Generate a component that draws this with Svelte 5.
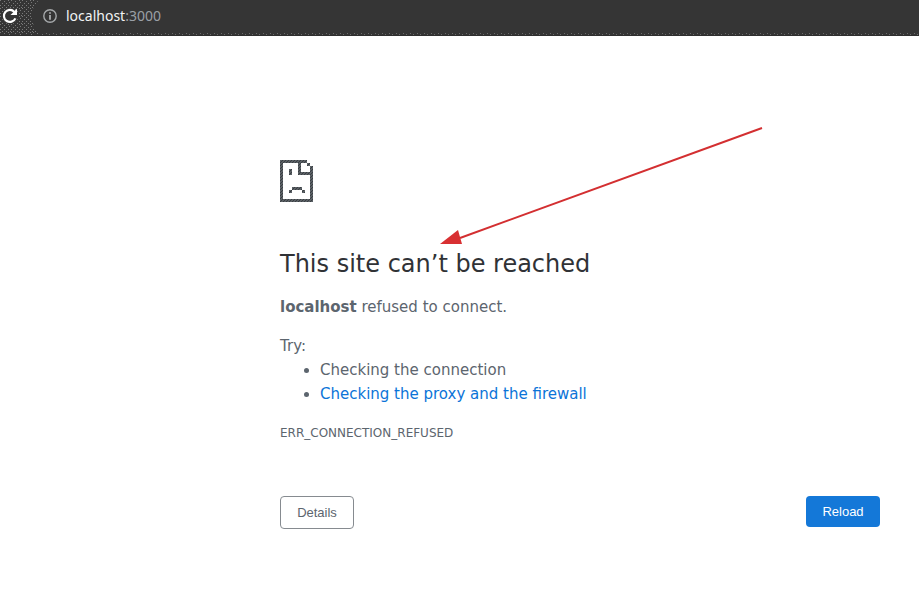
<script>
  const host = 'localhost';
  const port = ':3000';
  const suggestions = [
    { text: 'Checking the connection' },
    { text: 'Checking the proxy and the firewall', href: '#firewall' }
  ];
</script>

<div class="page">
  <header class="toolbar">
    <svg class="grain" aria-hidden="true">
      <defs>
        <pattern id="dots" width="11" height="8" patternUnits="userSpaceOnUse">
          <path
            d="M0 0h1v1H0zM4 1h1v1H4zM8 0h1v1H8zM2 3h1v1H2zM6 3h1v1H6zM9 2h1v1H9zM0 5h1v1H0zM4 5h1v1H4zM8 5h1v1H8zM2 7h1v1H2zM6 7h1v1H6zM10 7h1v1H10z"
            fill="#7a7a7a"
          />
        </pattern>
        <pattern id="edge-dots" width="7" height="2" patternUnits="userSpaceOnUse">
          <path d="M0 0h1v1H0zM4 1h1v1H4z" fill="#6c6c6c" />
        </pattern>
      </defs>
      <path d="M0 0H39L34 6L31 16L34 27L42 35H0z" fill="url(#dots)" />
      <rect x="42" y="33" width="100%" height="2" fill="url(#edge-dots)" />
    </svg>
    <button class="icon-button" aria-label="Reload page">
      <svg width="18" height="18" viewBox="0 0 18 18" aria-hidden="true">
        <circle cx="9" cy="9" r="8" fill="#353535" />
        <path d="M14.4 11.4A6 6 0 1 1 13.4 4.9" fill="none" stroke="#fff" stroke-width="2.2" />
        <path d="M16 1.5V8H9.5z" fill="#fff" />
      </svg>
    </button>
    <div class="address">
      <svg width="14" height="14" viewBox="0 0 14 14" aria-hidden="true">
        <circle cx="7" cy="7" r="6.2" fill="none" stroke="#a5a8aa" stroke-width="1.4" />
        <path d="M6.2 3.3h1.6v1.5H6.2zM6.2 6h1.6v4.7H6.2z" fill="#b8bbbd" />
      </svg>
      <span class="url">{host}<span class="port">{port}</span></span>
    </div>
  </header>

  <main>
    <svg class="sad-page" width="33" height="42" viewBox="0 0 33 42" shape-rendering="crispEdges" aria-hidden="true">
      <defs>
        <pattern id="weave" width="3" height="3" patternUnits="userSpaceOnUse">
          <path d="M0 0h3v3H0z" fill="#5a6065" />
          <path d="M1 1h1v1H1zM2 0h1v1H2zM0 2h1v1H0z" fill="#3a3e42" />
        </pattern>
      </defs>
      <path
        d="M0 0H27V3H21V12H33V15H18V3H3V39H30V15H30V6H33V42H0zM27 3h3v3H27zM9 9h3v6H9zM12 27h10v3H12zM9 30h3v3H9zM22 30h3v3H22z"
        fill="url(#weave)"
      />
    </svg>
    <h1>This site can’t be reached</h1>
    <p><strong>{host}</strong> refused to connect.</p>
    <div class="suggestions">
      <p>Try:</p>
      <ul>
        {#each suggestions as item}
          <li>
            {#if item.href}<a href={item.href}>{item.text}</a>{:else}{item.text}{/if}
          </li>
        {/each}
      </ul>
    </div>
    <p class="code">ERR_CONNECTION_REFUSED</p>
    <div class="actions">
      <button class="details">Details</button>
      <button class="reload">Reload</button>
    </div>
  </main>

  <svg class="arrow" width="324" height="118" viewBox="0 0 324 118" aria-hidden="true">
    <path d="M20 111L322 1" stroke="#d32f31" stroke-width="2" />
    <path d="M0 117L18 103L22 117z" fill="#d83032" />
  </svg>
</div>

<style>
  :global(body) {
    margin: 0;
    background: #fff;
  }
  .page {
    position: relative;
    font-family: 'DejaVu Sans', sans-serif;
    color: #5c656e;
  }
  .toolbar {
    position: relative;
    display: flex;
    align-items: center;
    gap: 24px;
    box-sizing: border-box;
    height: 36px;
    padding: 0 0 4px 1px;
    background: #353535;
    border-bottom: 1px solid #2e2e2e;
  }
  .grain {
    position: absolute;
    inset: 0;
    width: 100%;
    height: 100%;
  }
  .icon-button {
    position: relative;
    display: flex;
    margin: 0;
    padding: 0;
    border: 0;
    background: none;
  }
  .address {
    position: relative;
    display: flex;
    align-items: center;
    gap: 9px;
  }
  .url {
    font: 14px/20px 'Noto Sans', sans-serif;
    color: #f1f3f4;
  }
  .port {
    color: #9aa0a6;
  }
  main {
    padding: 124px 39px 0 280px;
    font-size: 15px;
    line-height: 24px;
  }
  .sad-page {
    display: block;
  }
  h1 {
    margin: 47px 0 16px;
    font-size: 24px;
    line-height: 30px;
    font-weight: 400;
    color: #303236;
  }
  p {
    margin: 0;
  }
  .suggestions {
    margin-top: 15px;
  }
  ul {
    margin: 0;
    padding-left: 40px;
  }
  a {
    color: #0b74d8;
    text-decoration: none;
  }
  .code {
    margin-top: 15px;
    font-size: 12px;
  }
  .actions {
    display: flex;
    justify-content: space-between;
    align-items: flex-start;
    margin-top: 51px;
  }
  .actions button {
    box-sizing: border-box;
    width: 74px;
    margin: 0;
    padding: 0;
    border-radius: 4px;
    font: 13px/31px 'Liberation Sans', sans-serif;
  }
  .details {
    border: 1px solid #868b90;
    background: #fff;
    color: #5c656e;
  }
  .reload {
    border: 0;
    background: #1478d8;
    color: #fff;
  }
  .arrow {
    position: absolute;
    left: 440px;
    top: 127px;
    pointer-events: none;
  }
</style>
